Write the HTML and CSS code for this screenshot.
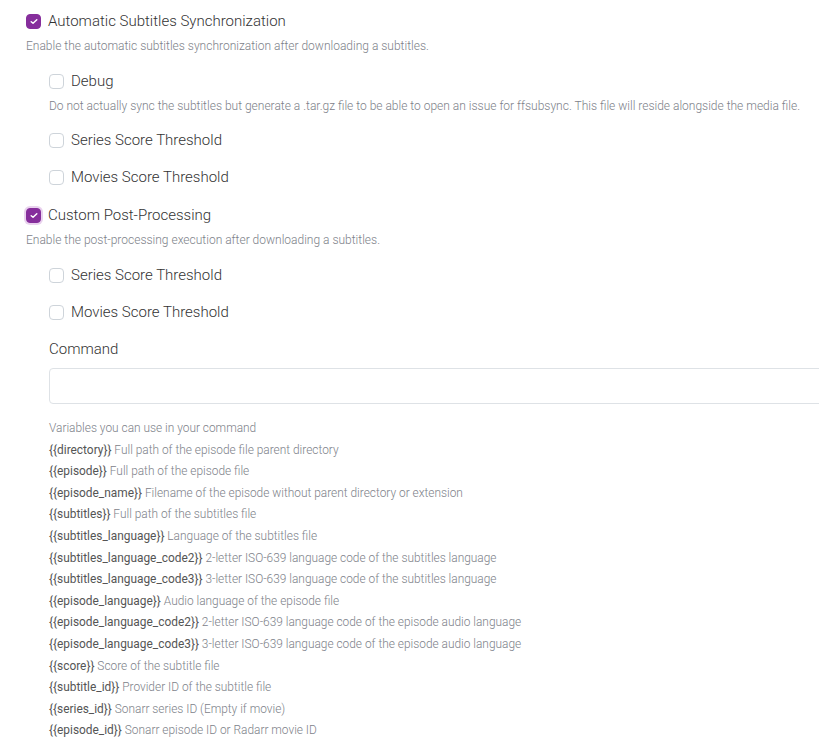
FILE: index.html
```html
<!DOCTYPE html>
<html lang="en">
<head>
  <meta charset="UTF-8">
  <meta name="viewport" content="width=device-width, initial-scale=1.0">
  <title>Subtitles Settings</title>
  <link rel="stylesheet" href="styles.css">
</head>
<body>
  <main class="settings">
    <div class="block">
      <label class="check-row">
        <span class="box checked"><svg viewBox="0 0 10 8"><path d="M1.5 4.2 L3.8 6.3 L8.5 1.7"/></svg></span>
        <span class="label">Automatic Subtitles Synchronization</span>
      </label>
      <p class="desc">Enable the automatic subtitles synchronization after downloading a subtitles.</p>
    </div>

    <div class="nested">
      <div class="block">
        <label class="check-row">
          <span class="box"></span>
          <span class="label">Debug</span>
        </label>
        <p class="desc">Do not actually sync the subtitles but generate a .tar.gz file to be able to open an issue for ffsubsync. This file will reside alongside the media file.</p>
      </div>
      <div class="block">
        <label class="check-row">
          <span class="box"></span>
          <span class="label">Series Score Threshold</span>
        </label>
      </div>
      <div class="block">
        <label class="check-row">
          <span class="box"></span>
          <span class="label">Movies Score Threshold</span>
        </label>
      </div>
    </div>

    <div class="block">
      <label class="check-row">
        <span class="box checked focused"><svg viewBox="0 0 10 8"><path d="M1.5 4.2 L3.8 6.3 L8.5 1.7"/></svg></span>
        <span class="label">Custom Post-Processing</span>
      </label>
      <p class="desc">Enable the post-processing execution after downloading a subtitles.</p>
    </div>

    <div class="nested">
      <div class="block">
        <label class="check-row">
          <span class="box"></span>
          <span class="label">Series Score Threshold</span>
        </label>
      </div>
      <div class="block">
        <label class="check-row">
          <span class="box"></span>
          <span class="label">Movies Score Threshold</span>
        </label>
      </div>
      <div class="block">
        <label class="field-label" for="command">Command</label>
        <input type="text" id="command" class="text-input">
      </div>

      <ul class="vars">
        <li>Variables you can use in your command</li>
        <li><b>{{directory}}</b> Full path of the episode file parent directory</li>
        <li><b>{{episode}}</b> Full path of the episode file</li>
        <li><b>{{episode_name}}</b> Filename of the episode without parent directory or extension</li>
        <li><b>{{subtitles}}</b> Full path of the subtitles file</li>
        <li><b>{{subtitles_language}}</b> Language of the subtitles file</li>
        <li><b>{{subtitles_language_code2}}</b> 2-letter ISO-639 language code of the subtitles language</li>
        <li><b>{{subtitles_language_code3}}</b> 3-letter ISO-639 language code of the subtitles language</li>
        <li><b>{{episode_language}}</b> Audio language of the episode file</li>
        <li><b>{{episode_language_code2}}</b> 2-letter ISO-639 language code of the episode audio language</li>
        <li><b>{{episode_language_code3}}</b> 3-letter ISO-639 language code of the episode audio language</li>
        <li><b>{{score}}</b> Score of the subtitle file</li>
        <li><b>{{subtitle_id}}</b> Provider ID of the subtitle file</li>
        <li><b>{{series_id}}</b> Sonarr series ID (Empty if movie)</li>
        <li><b>{{episode_id}}</b> Sonarr episode ID or Radarr movie ID</li>
      </ul>
    </div>
  </main>
</body>
</html>
```

FILE: styles.css
```css
body {
  margin: 0;
  padding: 0;
  background: #fff;
  font-family: Roboto, "Liberation Sans", Arial, sans-serif;
  overflow: hidden;
}
.settings {
  padding: 10px 0 0 26px;
  display: flex;
  flex-direction: column;
  gap: 16px;
}
.nested {
  padding-left: 23px;
  display: flex;
  flex-direction: column;
  gap: 15px;
}
.block {
  display: flex;
  flex-direction: column;
}
.check-row {
  display: flex;
  align-items: center;
  gap: 7px;
  height: 22px;
  cursor: pointer;
}
.box {
  width: 13px;
  height: 13px;
  border: 1px solid #ced4da;
  border-radius: 4px;
  background: #fff;
  display: flex;
  align-items: center;
  justify-content: center;
  box-sizing: content-box;
}
.box.checked {
  background: #862e9c;
  border-color: #862e9c;
}
.box.focused {
  box-shadow: 0 0 0 2px #e9d2ee;
}
.box svg {
  width: 8px;
  height: 7px;
  fill: none;
  stroke: #fff;
  stroke-width: 1.8;
  stroke-linecap: round;
  stroke-linejoin: round;
}
.label {
  font-size: 15px;
  font-weight: 300;
  color: #333;
}
.desc {
  margin: 6px 0 0;
  font-size: 12px;
  font-weight: 300;
  line-height: 16px;
  color: #7d8189;
}
.field-label {
  font-size: 15px;
  font-weight: 300;
  line-height: 22px;
  color: #333;
}
.text-input {
  margin-top: 8px;
  width: 800px;
  height: 36px;
  box-sizing: border-box;
  border: 1px solid #dee2e6;
  border-radius: 4px;
  padding: 0 12px;
  font-family: inherit;
  font-size: 14px;
}
.vars {
  list-style: none;
  margin: -1px 0 0;
  padding: 0;
  font-size: 11.9px;
  font-weight: 300;
  line-height: 21.6px;
  color: #7d8189;
}
.vars b {
  font-weight: 400;
  color: #555;
}
```
